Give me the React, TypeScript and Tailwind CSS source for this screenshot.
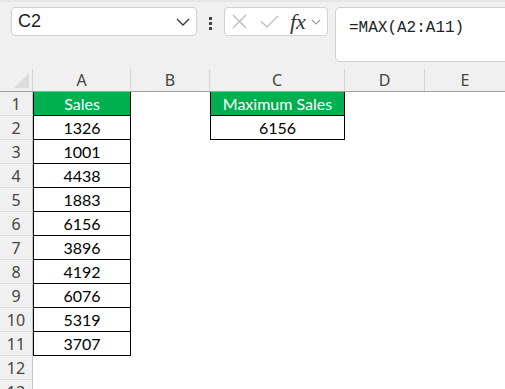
import React from 'react';

const salesValues = [1326, 1001, 4438, 1883, 6156, 3896, 4192, 6076, 5319, 3707];

const cellFont = { fontFamily: 'Lato, "Liberation Sans", sans-serif' };

const RowHeader: React.FC<{ n: number }> = ({ n }) => (
  <div className="w-[33px] shrink-0 h-full flex items-center justify-center bg-[#f0f0f0] border-r border-b border-r-[#c6c6c6] border-b-[#dcdcdc] text-[16px] text-[#444]">
    {n}
  </div>
);

export default function App() {
  const rows = Array.from({ length: 13 }, (_, i) => i + 1);

  return (
    <div
      className="w-[505px] h-[389px] overflow-hidden bg-white"
      style={{ fontFamily: '"Noto Sans", "Open Sans", sans-serif' }}
    >
      {/* Formula bar */}
      <div className="h-[69px] bg-[#f0f0f0] border-t-2 border-[#e6e6e6] relative">
        <div className="absolute left-[11px] top-[5px] w-[186px] h-[29px] bg-white border border-[#d1d1d1] rounded-[4px] flex items-center pl-[6px] pr-[6px]">
          <span className="text-[18px] text-[#222] flex-1" style={{ fontFamily: '"Liberation Sans", sans-serif' }}>C2</span>
          <svg width="14" height="8" viewBox="0 0 14 8" fill="none" stroke="#333" strokeWidth="1.3">
            <path d="M1 1 L7 7 L13 1" />
          </svg>
        </div>

        {/* vertical dots */}
        <div className="absolute left-[209px] top-[15px] flex flex-col gap-[2px]">
          <div className="w-[3px] h-[3px] bg-[#444]" />
          <div className="w-[3px] h-[3px] bg-[#444]" />
          <div className="w-[3px] h-[3px] bg-[#444]" />
        </div>

        <div className="absolute left-[224px] top-[5px] w-[104px] h-[29px] bg-white border border-[#d1d1d1] rounded-[4px] flex items-center">
          <svg className="ml-[7px]" width="15" height="15" viewBox="0 0 15 15" fill="none" stroke="#b8b8b8" strokeWidth="1.2">
            <path d="M1 1 L14 14 M14 1 L1 14" />
          </svg>
          <svg className="ml-[13px]" width="19" height="13" viewBox="0 0 19 13" fill="none" stroke="#b8b8b8" strokeWidth="1.2">
            <path d="M1 6.5 L7 12 L18 1" />
          </svg>
          <span
            className="ml-[11px] text-[22px] italic text-[#333] leading-none"
            style={{ fontFamily: '"Liberation Serif", serif' }}
          >
            fx
          </span>
          <svg className="ml-[5px]" width="10" height="6" viewBox="0 0 10 6" fill="none" stroke="#999" strokeWidth="1.1">
            <path d="M1 1 L5 5 L9 1" />
          </svg>
        </div>

        <div className="absolute left-[335px] top-[5px] w-[180px] h-[55px] bg-white border border-[#d1d1d1] rounded-[5px] pl-[13px] pt-[6px]">
          <span className="text-[16px] text-[#222]" style={{ fontFamily: '"Liberation Mono", monospace' }}>
            =MAX(A2:A11)
          </span>
        </div>
      </div>

      {/* Column headers */}
      <div className="flex h-[23px] bg-[#f0f0f0] border-b border-[#a0a0a0] text-[16px] text-[#444]">
        <div className="w-[33px] shrink-0 h-full border-r border-[#d4d4d4] relative">
          <svg className="absolute right-[3px] bottom-[3px]" width="15" height="15" viewBox="0 0 15 15">
            <path d="M15 0 L15 15 L0 15 Z" fill="#dcdcdc" />
          </svg>
        </div>
        <div className="w-[98px] shrink-0 flex items-center justify-center border-r border-[#d4d4d4]">A</div>
        <div className="w-[79px] shrink-0 flex items-center justify-center border-r border-[#d4d4d4]">B</div>
        <div className="w-[135px] shrink-0 flex items-center justify-center border-r border-[#d4d4d4]">C</div>
        <div className="w-[80px] shrink-0 flex items-center justify-center border-r border-[#d4d4d4]">D</div>
        <div className="w-[80px] shrink-0 flex items-center justify-center">E</div>
      </div>

      {/* Grid rows */}
      {rows.map((n) => {
        let aCell: React.ReactNode = null;
        if (n === 1) {
          aCell = (
            <div className="w-[98px] shrink-0 h-full bg-[#00b050] text-white border-l border-r border-b border-black flex items-center justify-center text-[16px]" style={cellFont}>
              Sales
            </div>
          );
        } else if (n <= 11) {
          aCell = (
            <div className="w-[98px] shrink-0 h-full bg-white text-black border-l border-r border-b border-black flex items-center justify-center text-[16px]" style={cellFont}>
              {salesValues[n - 2]}
            </div>
          );
        } else {
          aCell = <div className="w-[98px] shrink-0 h-full" />;
        }

        let cCell: React.ReactNode = <div className="w-[135px] shrink-0 h-full" />;
        if (n === 1) {
          cCell = (
            <div className="w-[135px] shrink-0 h-full bg-[#00b050] text-white border border-t-0 border-black flex items-center justify-center text-[16px]" style={cellFont}>
              Maximum Sales
            </div>
          );
        } else if (n === 2) {
          cCell = (
            <div className="w-[135px] shrink-0 h-full bg-white text-black border-l border-r border-b border-black flex items-center justify-center text-[16px]" style={cellFont}>
              6156
            </div>
          );
        }

        return (
          <div key={n} className="flex h-[24px]">
            <RowHeader n={n} />
            {aCell}
            <div className="w-[79px] shrink-0 h-full" />
            {cCell}
            <div className="flex-1 h-full" />
          </div>
        );
      })}
    </div>
  );
}
